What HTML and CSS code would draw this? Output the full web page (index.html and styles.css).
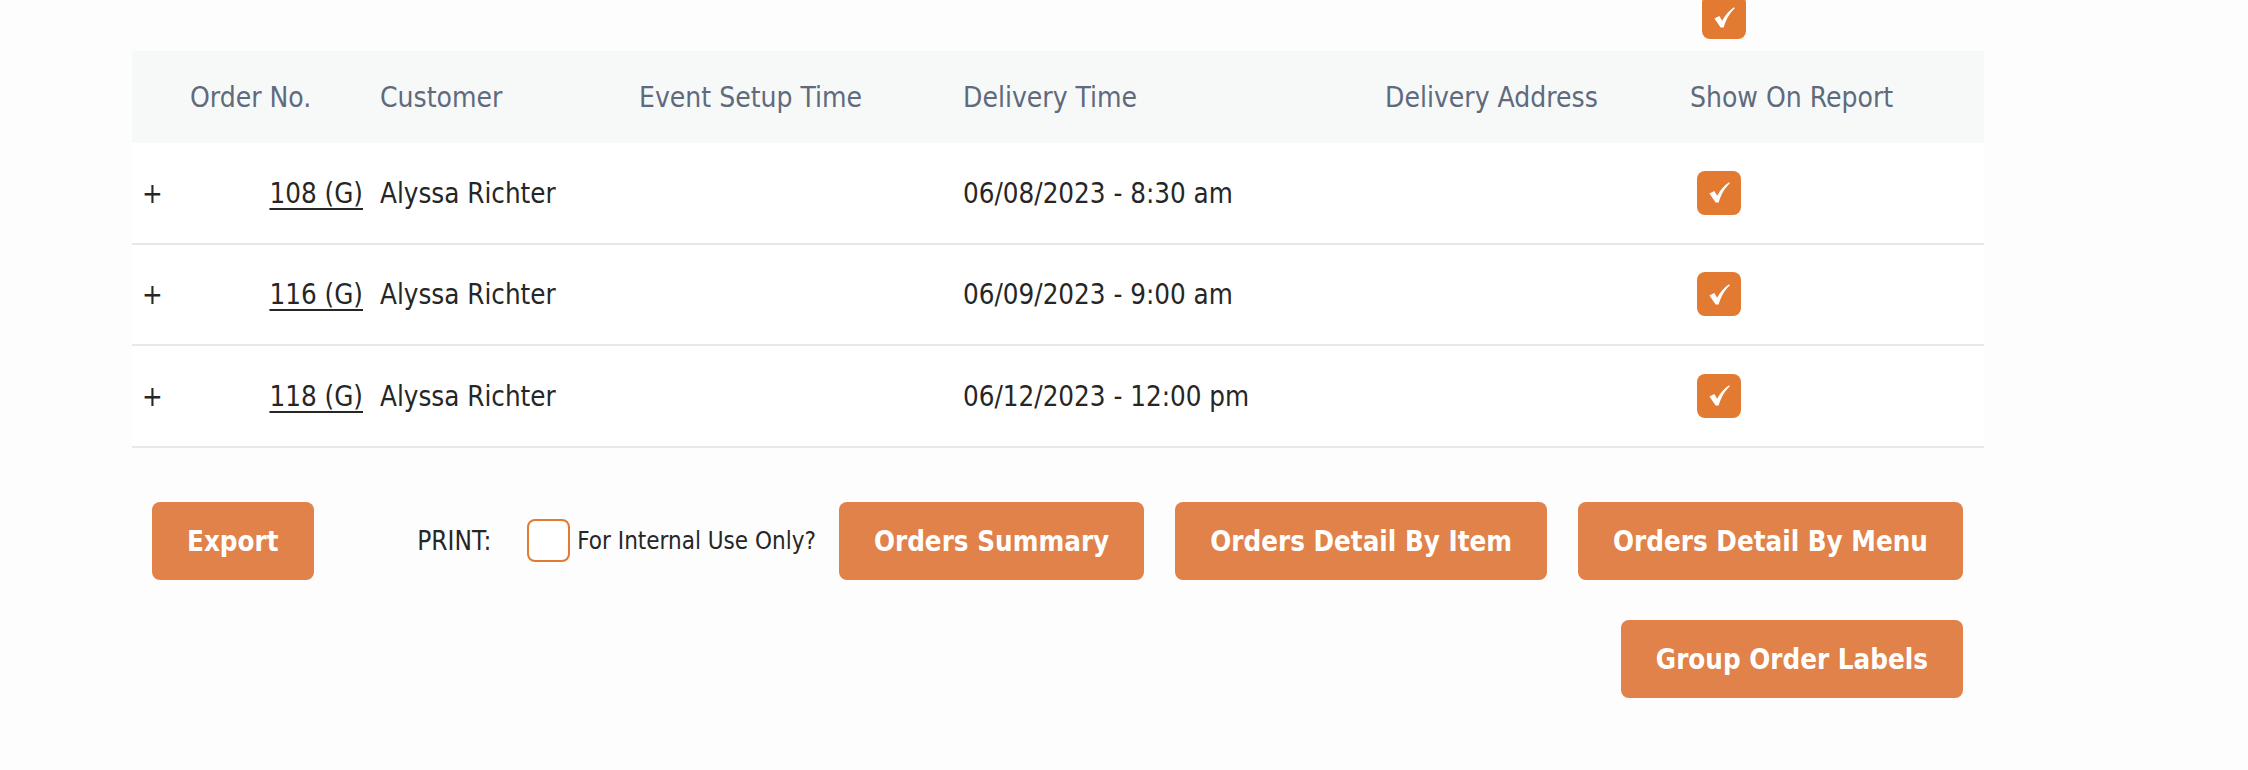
FILE: index.html
```html
<!DOCTYPE html>
<html lang="en">
<head>
<meta charset="utf-8">
<title>Orders</title>
<link rel="stylesheet" href="styles.css">
</head>
<body>
<div class="page">
  <div class="topbar">
    <span class="cb cb-checked cb-top"><svg viewBox="0 0 24 24"><path d="M1.5 13 L6.6 10.4 L9.6 15.4 C12.6 9.6 16.6 4.8 22 1.2 L22.8 2.4 C17.8 7 13.8 13.4 11.2 22.4 L8 22.4 Z"/></svg></span>
  </div>
  <div class="table">
    <div class="row head">
      <div class="cell"></div>
      <div class="cell">Order No.</div>
      <div class="cell">Customer</div>
      <div class="cell">Event Setup Time</div>
      <div class="cell">Delivery Time</div>
      <div class="cell">Delivery Address</div>
      <div class="cell">Show On Report</div>
    </div>
    <div class="row">
      <div class="cell plus">+</div>
      <div class="cell num"><a href="#">108 (G)</a></div>
      <div class="cell">Alyssa Richter</div>
      <div class="cell"></div>
      <div class="cell">06/08/2023 - 8:30 am</div>
      <div class="cell"></div>
      <div class="cell"><span class="cb cb-checked"><svg viewBox="0 0 24 24"><path d="M1.5 13 L6.6 10.4 L9.6 15.4 C12.6 9.6 16.6 4.8 22 1.2 L22.8 2.4 C17.8 7 13.8 13.4 11.2 22.4 L8 22.4 Z"/></svg></span></div>
    </div>
    <div class="row">
      <div class="cell plus">+</div>
      <div class="cell num"><a href="#">116 (G)</a></div>
      <div class="cell">Alyssa Richter</div>
      <div class="cell"></div>
      <div class="cell">06/09/2023 - 9:00 am</div>
      <div class="cell"></div>
      <div class="cell"><span class="cb cb-checked"><svg viewBox="0 0 24 24"><path d="M1.5 13 L6.6 10.4 L9.6 15.4 C12.6 9.6 16.6 4.8 22 1.2 L22.8 2.4 C17.8 7 13.8 13.4 11.2 22.4 L8 22.4 Z"/></svg></span></div>
    </div>
    <div class="row">
      <div class="cell plus">+</div>
      <div class="cell num"><a href="#">118 (G)</a></div>
      <div class="cell">Alyssa Richter</div>
      <div class="cell"></div>
      <div class="cell">06/12/2023 - 12:00 pm</div>
      <div class="cell"></div>
      <div class="cell"><span class="cb cb-checked"><svg viewBox="0 0 24 24"><path d="M1.5 13 L6.6 10.4 L9.6 15.4 C12.6 9.6 16.6 4.8 22 1.2 L22.8 2.4 C17.8 7 13.8 13.4 11.2 22.4 L8 22.4 Z"/></svg></span></div>
    </div>
  </div>
  <div class="actions">
    <button class="btn">Export</button>
    <div class="print-group">
      <span class="print-label">PRINT:</span>
      <label class="internal"><span class="cb cb-empty"></span><span>For Internal Use Only?</span></label>
      <button class="btn btn-summary">Orders Summary</button>
      <button class="btn">Orders Detail By Item</button>
      <button class="btn">Orders Detail By Menu</button>
    </div>
  </div>
  <div class="actions2">
    <button class="btn">Group Order Labels</button>
  </div>
</div>
</body>
</html>
```
FILE: styles.css
```css
html, body {
  margin: 0;
  padding: 0;
  background: #fdfdfd;
}
body {
  font-family: "DejaVu Sans Condensed", "DejaVu Sans", sans-serif;
  font-stretch: condensed;
  font-size: 27.5px;
  color: #262626;
}
.page {
  width: 1852px;
  margin-left: 132px;
}
.topbar {
  display: flex;
  padding-left: 1570px;
  height: 51px;
}
.cb {
  display: inline-flex;
  align-items: center;
  justify-content: center;
  width: 44px;
  height: 44px;
  box-sizing: border-box;
  border-radius: 8px;
}
.cb-checked {
  background: #e37a31;
}
.cb-checked svg {
  width: 23px;
  height: 23px;
  fill: #ffffff;
}
.cb-top {
  margin-top: -5px;
}
.cb-empty {
  background: #ffffff;
  border: 2px solid #e37a31;
  width: 43px;
  height: 43px;
}
.table {
  background: #ffffff;
}
.row {
  display: grid;
  grid-template-columns: 48px 190px 259px 324px 422px 305px 304px;
  align-items: center;
  height: 99.5px;
  border-bottom: 2px solid #e8e8e8;
}
.row.head {
  height: 92px;
  border-bottom: none;
  background: #f7f9f9;
  color: #606a7d;
  font-size: 28px;
}
.cell {
  padding-left: 10px;
  white-space: nowrap;
}
.cell.plus {
  padding-left: 10px;
}
.cell.num {
  text-align: right;
  padding-right: 7px;
}
.cell.num a {
  color: #262626;
  text-decoration: underline;
  text-underline-offset: 5px;
}
.row .cell:last-child .cb {
  margin-left: 7px;
}
.actions {
  display: flex;
  justify-content: space-between;
  align-items: center;
  padding: 0 21px 0 20px;
  margin-top: 54px;
}
.print-group {
  display: flex;
  align-items: center;
}
.print-label {
  font-size: 26px;
  margin-right: 36px;
}
.internal {
  display: flex;
  align-items: center;
  gap: 7px;
  font-size: 24px;
  margin-right: 23px;
}
.btn {
  font-family: "DejaVu Sans Condensed", "DejaVu Sans", sans-serif;
  font-stretch: condensed;
  font-weight: bold;
  font-size: 27.5px;
  color: #ffffff;
  background: #e0824a;
  border: none;
  border-radius: 8px;
  height: 78px;
  padding: 0 35px;
  margin: 0;
  cursor: pointer;
}
.print-group .btn + .btn {
  margin-left: 31px;
}
.actions2 {
  display: flex;
  justify-content: flex-end;
  padding-right: 21px;
  margin-top: 40px;
}
```
